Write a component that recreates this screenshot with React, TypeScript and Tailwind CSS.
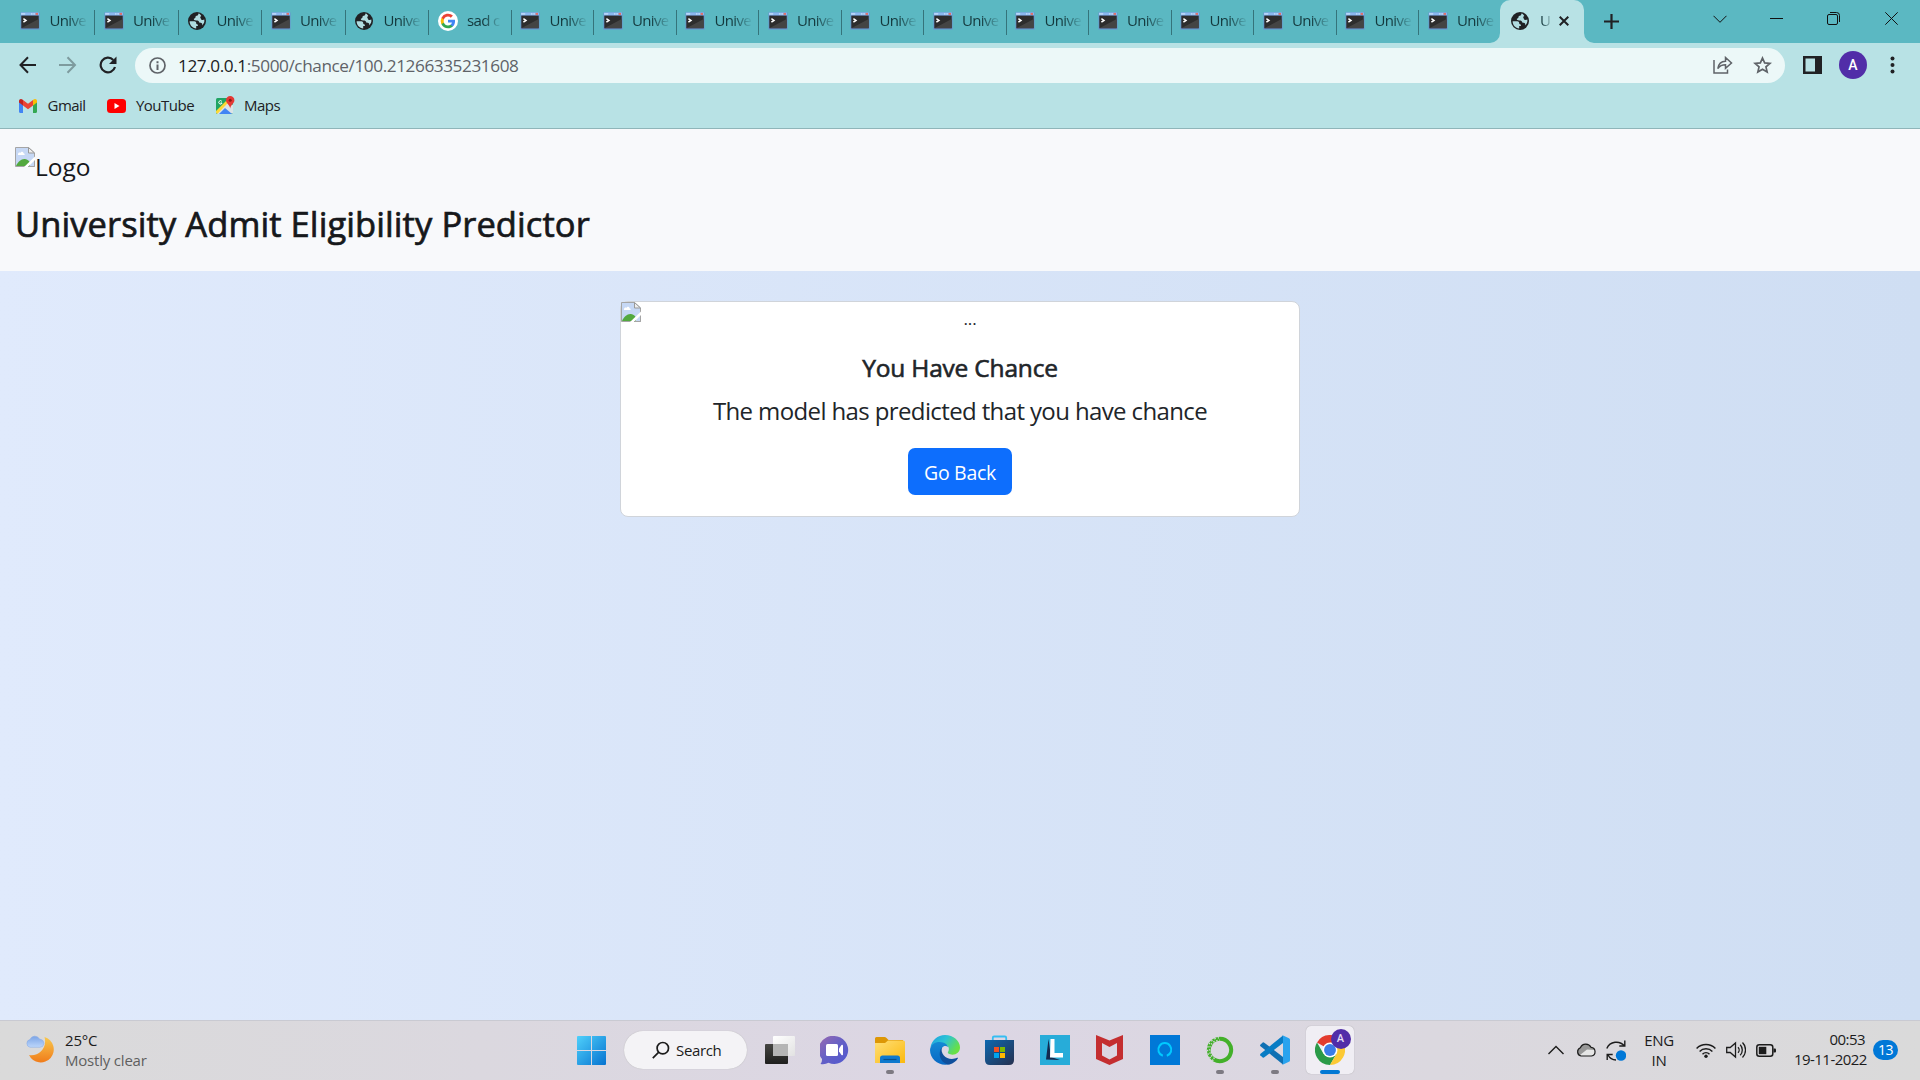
import React from "react";

type IconProps = { className?: string };

function TerminalIcon({ className = "" }: IconProps) {
  return (
    <svg className={className} viewBox="0 0 20 18" width="20" height="18">
      <rect x="0.5" y="0.5" width="19" height="17" fill="#6a90d0" />
      <rect x="1" y="0.5" width="18" height="3" fill="#8ab8f0" />
      <rect x="1.2" y="1.2" width="4" height="1.4" fill="#c4defa" />
      <rect x="11" y="1.2" width="1.5" height="1.4" fill="#c4defa" />
      <rect x="13.4" y="1.2" width="1.5" height="1.4" fill="#c4defa" />
      <rect x="15.6" y="0.9" width="2.4" height="2" fill="#e0706a" />
      <rect x="1.3" y="3.6" width="17.4" height="12.6" fill="#2d2d2d" />
      <path d="M1.3 16.2 18.7 7v9.2z" fill="#444" />
      <path d="M3.4 6.6 6 8.4 3.4 10.2" stroke="#fff" strokeWidth="1.5" fill="none" />
    </svg>
  );
}

function GlobeIcon({ className = "" }: IconProps) {
  return (
    <svg className={className} viewBox="0 0 20 20" width="20" height="20">
      <circle cx="10" cy="10" r="9" fill="#202124" />
      <path
        d="M11.5 2.6c-.3 1.8-1.2 2.4-2.7 2.5-.5 1.5-.1 2.4-1.9 2.7-.3 1.2.4 1.6 2.3 1.6 2 0 3 .6 3 2.2 2.4.1 3.6.9 2.9 2.8 1.8-1.5 2.6-3.4 2.2-5.8-1.6.7-3.3.3-3.5-1.2-.9-.5-.7-1.9.5-2.3-.5-1.2-1.4-2.2-2.8-2.5Z"
        fill="#b0dce0"
      />
      <path d="M2.6 10.3h4.6c1.6.2 2.3 1.2 2.1 2.6 1.4.1 1.7.8 1.6 2.2H9.2v2.3C5.400 17.200 2.700 14.300 2.600 10.300Z" fill="#b0dce0" />
    </svg>
  );
}

function GoogleIcon() {
  return (
    <svg viewBox="0 0 20 20" width="20" height="20">
      <circle cx="10" cy="10" r="10" fill="#fff" />
      <g transform="translate(2 2) scale(.6667)">
        <path fill="#4285f4" d="M22.560 12.250c0-.78-.07-1.530-.2-2.250H12v4.260h5.920a5.060 5.060 0 0 1-2.200 3.320v2.770h3.570c2.080-1.920 3.270-4.740 3.270-8.100Z" />
        <path fill="#34a853" d="M12 23c2.970 0 5.460-.98 7.280-2.660l-3.570-2.770c-.98.66-2.230 1.060-3.710 1.060-2.860 0-5.290-1.930-6.160-4.530H2.180v2.840A11 11 0 0 0 12 23Z" />
        <path fill="#fbbc05" d="M5.840 14.090a6.600 6.600 0 0 1 0-4.180V7.070H2.180a11 11 0 0 0 0 9.860l3.660-2.840Z" />
        <path fill="#ea4335" d="M12 5.380c1.620 0 3.060.56 4.210 1.640l3.150-3.150A11 11 0 0 0 2.180 7.070l3.660 2.840C6.710 7.310 9.140 5.380 12 5.380Z" />
      </g>
    </svg>
  );
}

function BrokenImage() {
  return (
    <svg className="shrink-0" viewBox="0 0 20 20" width="20" height="20">
      <path d="M.5.500h13l6 5.500v13.500H.5Z" fill="#c6d8f5" stroke="#a5a5a5" />
      <path d="M3 7.500c0-1.800 1.600-2.300 2.300-1.600.8-2 3.400-1.300 3.200.4 1.200 0 1.400 1.200 1 1.800H3Z" fill="#fff" />
      <path d="M1 19c2-4.500 5.500-7.500 9-7 2.500.3 4 2 5 3.500V19Z" fill="#53a93f" />
      <path d="M13.500.5V6h6Z" fill="#eee" stroke="#999" />
      <path d="M9 20 20 9.500V13l-7 7Z" fill="#fff" />
      <path d="M13 19.500h6.500V14" stroke="#a5a5a5" fill="none" />
    </svg>
  );
}

const tabs: ("term" | "globe" | "google")[] = [
  "term", "term", "globe", "term", "globe", "google", "term", "term", "term",
  "term", "term", "term", "term", "term", "term", "term", "term", "term",
];

function TabStrip() {
  return (
    <div className="flex h-[43px] bg-[#5bb8c2] pl-[11.5px] text-[15px] tracking-[-0.65px] text-[#14383c]">
      {tabs.map((kind, i) => (
        <div
          key={i}
          className={`flex h-full shrink-0 items-center pl-[8.500px] ${i < 5 ? "w-[83.500px]" : i === 17 ? "w-[81px]" : "w-[82.500px]"}`}
        >
          <span className="mb-[2px] flex w-5 shrink-0 justify-center">
            {kind === "term" ? <TerminalIcon /> : kind === "globe" ? <GlobeIcon /> : <GoogleIcon />}
          </span>
          <span className="mb-[2px] ml-[9.500px] shrink-0 whitespace-nowrap [mask-image:linear-gradient(to_right,#000_50%,transparent_105%)]">
            {kind === "google" ? "sad c" : "Unive"}
          </span>
          {i < tabs.length - 1 && <span className="mt-px ml-auto h-[25px] w-px bg-[#35747b]" />}
        </div>
      ))}
      <div className="relative flex w-[84px] shrink-0 items-center rounded-t-[10px] bg-[#b8e2e5] pb-[2px] pl-[10px]">
        <svg className="absolute bottom-0 -left-[10px]" width="10" height="10">
          <path d="M10 0v10H0A10 10 0 0 0 10 0Z" fill="#b8e2e5" />
        </svg>
        <svg className="absolute -right-[10px] bottom-0" width="10" height="10">
          <path d="M0 0v10h10A10 10 0 0 1 0 0Z" fill="#b8e2e5" />
        </svg>
        <GlobeIcon />
        <span className="ml-[10px] w-[10px] [mask-image:linear-gradient(to_right,#000_20%,transparent_130%)]">U</span>
        <svg className="ml-[9px]" width="10" height="10">
          <path d="m.7.700 8.600 8.600M9.300.700.700 9.300" stroke="#202124" strokeWidth="2" />
        </svg>
      </div>
      <svg className="mt-[14px] ml-[20px]" width="15" height="15">
        <path d="M7.500 0v15M0 7.500h15" stroke="#202124" strokeWidth="2.200" />
      </svg>
      <div className="mr-[22px] ml-auto flex h-[37px] items-center">
        <svg width="14" height="8"><path d="m.5.800 6.500 6.500 6.500-6.500" stroke="#111" fill="none" /></svg>
        <svg className="ml-[43px]" width="13" height="2"><path d="M0 .500h13" stroke="#111" /></svg>
        <svg className="ml-[44px]" width="13" height="13">
          <rect x=".5" y="2.500" width="10" height="10" rx="1.500" stroke="#111" fill="none" />
          <path d="M3 .500h6.500a3 3 0 0 1 3 3V10" stroke="#111" fill="none" />
        </svg>
        <svg className="ml-[45px]" width="13" height="13"><path d="m.3.300 12.400 12.400M12.700.300.300 12.700" stroke="#111" /></svg>
      </div>
    </div>
  );
}

function AddressBar() {
  return (
    <div className="flex h-[45px] items-center pb-px pl-[19px]">
      <svg width="18" height="18" fill="none" stroke="#202124" strokeWidth="2">
        <path d="M17 9H2M9 1.300 1.500 9 9 16.700" />
      </svg>
      <svg className="ml-[22px]" width="18" height="18" fill="none" stroke="#7e9b9e" strokeWidth="2">
        <path d="M0 9h15.500M8.500 1.300 16 9l-7.500 7.700" />
      </svg>
      <svg className="ml-[22px]" width="18" height="18">
        <path d="M14.300 4A7.300 7.300 0 1 0 16 11" stroke="#202124" strokeWidth="2.200" fill="none" />
        <path d="M17.500.500v7.500H10Z" fill="#202124" />
      </svg>
      <div className="ml-[18px] flex h-[35px] w-[1650px] items-center rounded-full bg-[#ecf8f8] pr-[13px] pl-[14px]">
        <svg width="17" height="17">
          <circle cx="8.500" cy="8.500" r="7.500" fill="none" stroke="#5f6368" strokeWidth="1.700" />
          <path d="M8.500 7.500V13M8.500 4.200v2" stroke="#5f6368" strokeWidth="2" />
        </svg>
        <span className="mt-px ml-[12px] text-[17.200px] leading-6 tracking-[-0.420px] text-[#5f6368]">
          <span className="text-[#202124]">127.0.0.1</span>:5000/chance/100.21266335231608
        </span>
        <svg className="ml-auto" width="20" height="18" fill="none" stroke="#5f6368" strokeWidth="1.500">
          <path d="M1 4v13h13.500v-3.500" />
          <path d="M4.800 12.500C5.500 8 8.500 5.300 12.500 5.200V1.500L18.500 7l-6 5.300V8.800c-3.500 0-5.700 1-7.700 3.700Z" />
        </svg>
        <svg className="ml-[20px]" width="19" height="18" fill="none" stroke="#5f6368" strokeWidth="1.700">
          <path d="m9.500 2 2.150 4.900 5.300.5-4 3.500 1.200 5.200L9.500 13.300l-4.650 2.800 1.200-5.200-4-3.500 5.300-.5Z" />
        </svg>
      </div>
      <svg className="ml-[18px]" width="19" height="18">
        <path d="M0 0h19v18H0Zm2.500 2.500v13H12v-13Z" fill="#202124" fillRule="evenodd" />
      </svg>
      <span className="ml-[17px] flex size-7 items-center justify-center rounded-full bg-[#512da8] font-[Roboto] text-[14px] font-medium text-white">A</span>
      <svg className="ml-[23px]" width="5" height="18" fill="#202124">
        <circle cx="2.500" cy="2.500" r="2" /><circle cx="2.500" cy="9" r="2" /><circle cx="2.500" cy="15.500" r="2" />
      </svg>
    </div>
  );
}

function Bookmarks() {
  return (
    <div className="flex h-[40px] items-center pb-[5px] pl-[19px] text-[15px] tracking-[-0.520px] text-[#202124]">
      <svg width="18" height="14" viewBox="0 0 18 14">
        <path d="M0 2v10.800C0 13.500.5 14 1.200 14H4V5Z" fill="#4285f4" />
        <path d="M18 2v10.800c0 .7-.5 1.200-1.200 1.200H14V5Z" fill="#34a853" />
        <path d="m4 1 5 3.800L14 1v5.500l-5 3.800-5-3.800Z" fill="#ea4335" />
        <path d="M0 2C0 .200 2 -.6 3.400.500L4 1v5.500L0 3.500Z" fill="#c5221f" />
        <path d="M18 2c0-1.800-2-2.600-3.400-1.500L14 1v5.500l4-3Z" fill="#fbbc04" />
      </svg>
      <span className="mb-px ml-[10.500px] w-[37.500px]">Gmail</span>
      <svg className="ml-[22px]" width="19" height="14">
        <rect width="19" height="14" rx="3.500" fill="#f00" /><path d="M7.500 4v6l5-3Z" fill="#fff" />
      </svg>
      <span className="mb-px ml-[10px] w-[58px]">YouTube</span>
      <svg className="ml-[22px]" width="19" height="19" viewBox="0 0 19 19">
        <rect y="2" width="17" height="16" rx="1.500" fill="#1fa463" />
        <path d="M0 16.500 12 5l5 4v8.500L9 18H1.500Z" fill="#dce3e6" />
        <path d="m3 18 6-6 7 6Z" fill="#4285f4" />
        <path d="M0 15 11 4l1.800 2L1.500 17.800Q0 17.500 0 16Z" fill="#fdd835" />
        <path d="M5.800 5.300a1.700 1.700 0 1 0 .3 1.700H4.500" stroke="#fff" fill="none" />
        <path d="M14.200 0a4.200 4.200 0 0 0-4.200 4.200c0 3.300 3.600 4 4.200 8.300.6-4.300 4.200-5 4.200-8.300A4.200 4.200 0 0 0 14.200 0Z" fill="#e53935" />
        <circle cx="14.200" cy="4.200" r="1.500" fill="#8e1b16" />
      </svg>
      <span className="mb-px ml-[9px]">Maps</span>
    </div>
  );
}

function Slot({ children, dot = false }: { children: React.ReactNode; dot?: boolean }) {
  return (
    <div className="relative flex h-[60px] w-[55px] shrink-0 items-center justify-center">
      {children}
      {dot && <span className="absolute bottom-[6px] h-[4px] w-2 rounded-full bg-[#7d7a82]" />}
    </div>
  );
}

function TaskIcons() {
  return (
    <>
      <Slot>
        <svg width="29" height="29">
          <defs>
            <linearGradient id="win" x1="0" y1="0" x2="1" y2="1" gradientUnits="objectBoundingBox">
              <stop stopColor="#4fd0fb" /><stop offset="1" stopColor="#0673d0" />
            </linearGradient>
          </defs>
          <path d="M1 0h13v14H0V1Q0 0 1 0Zm14 0h13q1 0 1 1v13H15ZM0 15h14v14H1q-1 0-1-1Zm15 0h14v13q0 1-1 1H15Z" fill="url(#win)" />
        </svg>
      </Slot>
      <div className="mr-[5px] ml-[5px] flex h-[38px] w-[123px] shrink-0 items-center rounded-full bg-[#f4f3f6] pl-[28px] text-[15px] tracking-[-0.350px] text-[#1b1b1b] shadow-[0_0_1px_#aaa]">
        <svg width="18" height="18" fill="none" stroke="#1b1b1b" strokeWidth="1.700">
          <circle cx="10.800" cy="7.200" r="5.700" /><path d="M6.800 11.200.8 17.200" />
        </svg>
        <span className="ml-[6px]">Search</span>
      </div>
      <Slot>
        <svg width="30" height="28">
          <defs>
            <linearGradient id="tv" x2="0" y2="1"><stop stopColor="#454542" /><stop offset="1" stopColor="#1f1f1e" /></linearGradient>
            <linearGradient id="tw" x2="1" y2="1"><stop stopColor="#fff" /><stop offset="1" stopColor="#e2e2e2" /></linearGradient>
          </defs>
          <rect y="8" width="23" height="20" rx="1" fill="url(#tv)" />
          <rect x="8" width="22" height="20" rx="1" fill="url(#tw)" />
          <path d="M8 8h15v12H8Z" fill="#b5b5b5" />
        </svg>
      </Slot>
      <Slot>
        <svg width="29" height="29">
          <defs><linearGradient id="chat" x2="1" y2="1"><stop stopColor="#9a6ab0" /><stop offset=".5" stopColor="#6460c6" /><stop offset="1" stopColor="#5058d0" /></linearGradient></defs>
          <path d="M14.500 0a14 14 0 1 1-6 26.800Q5 28.800.5 28q1.800-2.500 1.500-5A14 14 0 0 1 14.500 0Z" fill="url(#chat)" />
          <rect x="6" y="8" width="12" height="12" rx="1.500" fill="#fff" />
          <path d="M19 12.500 21.500 9q1.500-.6 1.500.6v8.800q0 1.200-1.500.6L19 15.500Z" fill="#fff" />
        </svg>
      </Slot>
      <Slot dot>
        <svg width="30" height="26">
          <defs><linearGradient id="fold" x2="1" y2="1"><stop stopColor="#ffdf78" /><stop offset="1" stopColor="#fbb90d" /></linearGradient></defs>
          <path d="M0 1.500Q0 0 1.500 0h8q1 0 2 1l2 2H28v5H0Z" fill="#dd9706" />
          <path d="M0 6h10l3-2.500h15.500Q30 3.500 30 5v21H0Z" fill="url(#fold)" />
          <path d="M5 26v-5q0-2.500 2.500-2.500h15Q25 18.500 25 21v5Z" fill="#0f79ce" />
          <path d="M8.500 22.500h13" stroke="#07508f" strokeWidth="1.200" />
        </svg>
      </Slot>
      <Slot>
        <svg width="30" height="30" viewBox="0 0 30 30">
          <defs>
            <linearGradient id="eg" x2="1" y2=".5"><stop stopColor="#1b9de0" /><stop offset=".5" stopColor="#2cc3d5" /><stop offset="1" stopColor="#68e045" /></linearGradient>
            <linearGradient id="eb" x2="0" y2="1"><stop stopColor="#1489d4" /><stop offset="1" stopColor="#0868c4" /></linearGradient>
          </defs>
          <path d="M.5 12C2 5 7.500 0 15 0c8.500 0 15 6 15 12.500 0 4.500-3.500 7.200-7.500 7.200-3.500 0-5.200-1.400-4.500-2.600 1.200-1.800 1.400-4.600-.8-6.600C13 6.700 5 7 .5 12Z" fill="url(#eg)" />
          <path d="M0 15C.5 9.500 5 7 9.500 7c5 0 8.500 3 8.500 5-2-1.500-4.500-1.200-6 1-3 4.500.5 13.500 8 16C10 32 0 25 0 15Z" fill="url(#eb)" />
          <path d="M11.800 12.500c-1.500 6 3.700 11.500 10 11.500 2.200 0 4-.6 5.200-1.200.9-.4 1.200.2.800.8-1.600 2.600-4.300 5-8.300 6C11 29 7 19 11.800 12.500Z" fill="#0f4f9c" />
        </svg>
      </Slot>
      <Slot>
        <svg width="29" height="30">
          <defs><linearGradient id="store" x2="1" y2="1"><stop stopColor="#0d68b0" /><stop offset="1" stopColor="#26304f" /></linearGradient></defs>
          <path d="M7.800 6V2.800q0-1.300 1.300-1.300h10.800q1.300 0 1.300 1.300V6" fill="none" stroke="#35bdf2" strokeWidth="1.800" />
          <path d="M0 5h29v20q0 5-5 5H5q-5 0-5-5Z" fill="url(#store)" />
          <path d="M9 12h5v5H9Z" fill="#f25022" /><path d="M15 12h5v5h-5Z" fill="#7fba00" />
          <path d="M9 18h5v5H9Z" fill="#00a4ef" /><path d="M15 18h5v5h-5Z" fill="#ffb900" />
        </svg>
      </Slot>
      <Slot>
        <svg width="30" height="30">
          <path d="M0 0h30v30H0Z" fill="#27acd9" /><path d="M8.500 4 6 24.500 20 25l-9-3Z" fill="#13294f" />
          <path d="M10.500 4h4v14H23v4.500H10Z" fill="#fff" />
        </svg>
      </Slot>
      <Slot>
        <svg width="27" height="30">
          <path d="m0 0 13.500 5.500L27 0v24l-13.500 6L0 24Zm6 8v12.500l7.500 4 7.500-4V8l-7.500 4Z" fill="#c42e30" fillRule="evenodd" />
        </svg>
      </Slot>
      <Slot>
        <svg width="30" height="30">
          <path d="M0 0h30v30H0Z" fill="#0078d7" />
          <path d="M12.800 20.800a6.500 6.500 0 1 1 4 0" stroke="#00caff" strokeWidth="2" fill="none" />
        </svg>
      </Slot>
      <Slot dot>
        <svg width="28" height="28" fill="none">
          <path d="M14 2.800A11.200 11.200 0 1 1 8 23.500" stroke="#43b02a" strokeWidth="4" />
          <path d="M8 23.500A11.200 11.200 0 0 1 14 2.800" stroke="#43b02a" strokeWidth="4" />
          <path d="M7.300 24.500A12.300 12.300 0 0 1 13 1.800" stroke="#dcd8e4" strokeWidth="1.300" strokeDasharray="1.500 2.200" />
          <path d="M8.500 22.500A9.800 9.800 0 0 1 14 4.200" stroke="#dcd8e4" strokeWidth="1.300" strokeDasharray="1.300 1.900" />
        </svg>
      </Slot>
      <Slot dot>
        <svg width="30" height="30">
          <path d="m.3 9.800 2.400-2.200q.8-.5 1.600.1L23 22v7.500L.5 11.300Q-.2 10.500.3 9.800Z" fill="#0f70b3" />
          <path d="m.3 20.200 2.400 2.200q.8.500 1.600-.1L23 8V.5L.5 18.700Q-.2 19.500.3 20.200Z" fill="#087cc4" />
          <path d="m22 0 7 3.200q1 .5 1 1.600v20.400q0 1.100-1 1.600L22 30q1-.5 1-2V2q0-1.500-1-2Z" fill="#29a3ee" />
        </svg>
      </Slot>
      <div className="relative ml-[3.500px] flex size-12 shrink-0 items-center justify-center rounded-[5px] bg-[#f0eef4] shadow-[0_0_1px_#999]">
        <svg width="30" height="30" viewBox="0 0 48 48">
          <path d="M24 24 3.200 12A24 24 0 0 1 44.800 12Z" fill="#e33b2e" />
          <path d="M3.200 12A24 24 0 0 0 24 48l10.400-18L24 24 13.600 30Z" fill="#2a9a48" />
          <path d="M44.800 12A24 24 0 0 1 24 48l10.400-18L24 12Z" fill="#fcc934" />
          <circle cx="24" cy="24" r="12" fill="#fff" /><circle cx="24" cy="24" r="9.500" fill="#3b7de8" />
        </svg>
        <span className="absolute top-[3px] right-[3px] flex size-5 items-center justify-center rounded-full bg-[#512da8] font-[Roboto] text-[11px] font-medium text-[#e4dcf4]">A</span>
        <span className="absolute bottom-0 h-[4px] w-5 rounded-full bg-[#0078d4]" />
      </div>
    </>
  );
}

function Tray() {
  return (
    <div className="ml-auto flex h-[60px] items-center pr-[22px] text-[15px] leading-5 text-[#1c1c1c]">
      <svg width="16" height="10" fill="none" stroke="#1c1c1c" strokeWidth="1.400"><path d="m.5 9 7.500-7.500L15.500 9" /></svg>
      <svg className="mb-[2px] ml-[12px]" width="20" height="15">
        <path d="M5 14a4.300 4.300 0 0 1-.6-8.200A5.800 5.800 0 0 1 15 5.300 4.400 4.400 0 0 1 15.500 14Z" fill="#e6e6e6" />
        <path d="M1 8.500Q2.500 6 4.400 5.800A5.800 5.800 0 0 1 15 5.300Q18 5.500 19 8L11 7.500 4 13Q1 12 1 8.500Z" fill="#979797" />
        <path d="M5 14a4.300 4.300 0 0 1-.6-8.200A5.800 5.800 0 0 1 15 5.300 4.400 4.400 0 0 1 15.500 14Z" fill="none" stroke="#1c1c1c" strokeWidth="1.200" />
      </svg>
      <svg className="ml-[10px]" width="20" height="21" fill="none" stroke="#1c1c1c" strokeWidth="1.400">
        <path d="M.8 8.500A10.500 10.500 0 0 1 18.500 6M18.800.500v5.500h-5.500M10 20A9.500 9.500 0 0 1 2 15M1.200 20v-5.500h5.500" />
        <circle cx="15" cy="15.500" r="5.200" fill="#0078d7" stroke="none" />
      </svg>
      <div className="ml-[18px] w-[30px] text-center tracking-[-0.300px]">
        <div>ENG</div><div>IN</div>
      </div>
      <svg className="ml-[22px]" width="20" height="15" fill="none" stroke="#1c1c1c" strokeWidth="1.500">
        <path d="M.6 5.500a13.300 13.300 0 0 1 18.800 0M3.600 8.500a9 9 0 0 1 12.800 0M6.500 11.200a5 5 0 0 1 7 0" />
        <circle cx="10" cy="13.200" r="1.700" fill="#1c1c1c" stroke="none" />
      </svg>
      <svg className="ml-[10px]" width="20" height="18" fill="none" stroke="#1c1c1c" strokeWidth="1.300">
        <path d="M.7 6.500h3.500L9.500 2v14l-5.300-4.500H.7ZM12 6.200a4 4 0 0 1 0 5.600M14.200 3.800a7.500 7.500 0 0 1 0 10.400M16.500 1.500a10.800 10.800 0 0 1 0 15" />
      </svg>
      <svg className="ml-[10px]" width="20" height="13">
        <rect x=".8" y=".8" width="16" height="11.400" rx="2.500" fill="none" stroke="#1c1c1c" strokeWidth="1.500" />
        <rect x="2.800" y="2.800" width="7.500" height="7.400" fill="#1c1c1c" /><path d="M17.500 4.500h1.500q1 0 1 1v2q0 1-1 1h-1.500Z" fill="#1c1c1c" />
      </svg>
      <div className="mb-[2px] ml-[18px] w-[71px] text-right tracking-[-0.550px] whitespace-nowrap">
        <div>00:53</div><div>19-11-2022</div>
      </div>
      <span className="ml-[8px] flex h-5 w-[25px] items-center justify-center rounded-full bg-[#0078d7] text-[14px] tracking-[-0.500px] text-white">13</span>
    </div>
  );
}

function Taskbar() {
  return (
    <div className="flex h-[60px] items-center bg-linear-to-r from-[#dadada] via-[#dcd6e4] to-[#dadada] shadow-[inset_0_1px_0_#c9cad2]">
      <div className="flex w-[564px] shrink-0 items-center pl-[26px]">
        <svg className="mb-[2px]" width="28" height="28">
          <defs>
            <linearGradient id="moon" x2="0" y2="1"><stop stopColor="#f8c84e" /><stop offset="1" stopColor="#f07c1a" /></linearGradient>
            <linearGradient id="cloud" x2="0" y2="1"><stop stopColor="#7ba4e6" /><stop offset="1" stopColor="#bcd6fb" /></linearGradient>
          </defs>
          <path d="M18.500 2A13 13 0 1 1 3 20C13 21.500 21.500 13 18.500 2Z" fill="url(#moon)" />
          <path d="M4 12.300a4 4 0 0 1 0-7.800A5.200 5.200 0 0 1 13.500 4q4 .3 4.500 4.300-.5 4-4 4Z" fill="url(#cloud)" stroke="#86a8e2" strokeWidth=".5" />
        </svg>
        <div className="ml-[11px] text-[15px] leading-5 tracking-[-0.200px] text-[#1c1c1c]">
          <div>25°C</div><div className="text-[#5f5f5f]">Mostly clear</div>
        </div>
      </div>
      <TaskIcons />
      <Tray />
    </div>
  );
}

export default function App() {
  return (
    <div className="flex h-[1080px] w-[1920px] flex-col overflow-hidden font-['Open_Sans',sans-serif]">
      <TabStrip />
      <div className="h-[86px] border-b border-[#8fb5b9] bg-[#b8e2e5]">
        <AddressBar />
        <Bookmarks />
      </div>
      <header className="h-[142px] bg-[#f8f9fb] pt-[18px] pl-[15px] text-[#16181b]">
        <div className="flex h-[46px]">
          <BrokenImage />
          <span className="text-[24.500px] leading-[40px] tracking-[-0.050px]">Logo</span>
        </div>
        <h1 className="text-[34.500px] leading-[62px] tracking-[0.080px] [-webkit-text-stroke:0.7px_#16181b]">University Admit Eligibility Predictor</h1>
      </header>
      <main className="flex flex-1 items-start justify-center bg-linear-to-r from-[#e0eafc] to-[#cfdef3] pt-[30px]">
        <section className="flex h-[216px] w-[680px] flex-col items-center rounded-[8px] border border-[#d0d4da] bg-white text-[#212529]">
          <div className="flex h-[45px] w-full">
            <BrokenImage />
            <span className="flex-1 text-center text-[17px] leading-[34px] tracking-[-0.200px]">...</span>
          </div>
          <h2 className="text-[24.500px] leading-[42px] tracking-[-0.200px] [-webkit-text-stroke:0.6px_#212529]">You Have Chance</h2>
          <p className="text-[24px] leading-[44px] tracking-[-0.620px]">The model has predicted that you have chance</p>
          <button className="mt-[15px] h-[47px] w-[104px] rounded-[7px] bg-[#0d6efd] pt-[2px] text-[19.500px] tracking-[-0.300px] text-white">Go Back</button>
        </section>
      </main>
      <Taskbar />
    </div>
  );
}
